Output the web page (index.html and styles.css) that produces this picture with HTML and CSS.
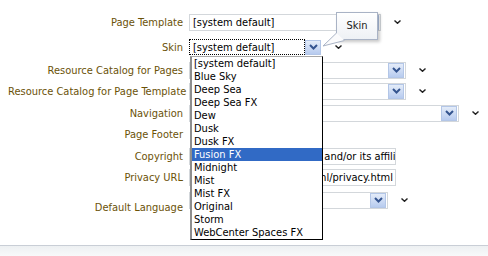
FILE: index.html
```html
<!DOCTYPE html>
<html lang="en">
<head>
    <meta charset="UTF-8">
    <title>Page Properties</title>
    <link rel="stylesheet" href="styles.css">
</head>
<body>
    <div class="page">
        <div class="form">
            <div class="label">Page Template</div>
            <div class="field">
                <div class="select w-page">
                    <span class="value">[system default]</span>
                    <span class="drop-btn"><svg width="9" height="6" viewBox="0 0 9 6"><path d="M1 1 L4.5 4.5 L8 1" fill="none" stroke="#34548f" stroke-width="2"/></svg></span>
                </div>
                <svg class="chev" width="7" height="4" viewBox="0 0 7 4"><path d="M0.5 0.5 L3.5 3.3 L6.5 0.5" fill="none" stroke="#222" stroke-width="1.4"/></svg>
            </div>

            <div class="label">Skin</div>
            <div class="field">
                <div class="skin-wrap">
                    <div class="select focused">
                        <span class="value focus-box">[system default]</span>
                        <span class="drop-btn"><svg width="9" height="6" viewBox="0 0 9 6"><path d="M1 1 L4.5 4.5 L8 1" fill="none" stroke="#34548f" stroke-width="2"/></svg></span>
                    </div>
                    <ul class="listbox">
                        <li>[system default]</li>
                        <li>Blue Sky</li>
                        <li>Deep Sea</li>
                        <li>Deep Sea FX</li>
                        <li>Dew</li>
                        <li>Dusk</li>
                        <li>Dusk FX</li>
                        <li class="selected">Fusion FX</li>
                        <li>Midnight</li>
                        <li>Mist</li>
                        <li>Mist FX</li>
                        <li>Original</li>
                        <li>Storm</li>
                        <li>WebCenter Spaces FX</li>
                    </ul>
                </div>
                <svg class="chev" width="7" height="4" viewBox="0 0 7 4"><path d="M0.5 0.5 L3.5 3.3 L6.5 0.5" fill="none" stroke="#222" stroke-width="1.4"/></svg>
            </div>

            <div class="label">Resource Catalog for Pages</div>
            <div class="field">
                <div class="select w-catalog">
                    <span class="value"></span>
                    <span class="drop-btn"><svg width="9" height="6" viewBox="0 0 9 6"><path d="M1 1 L4.5 4.5 L8 1" fill="none" stroke="#34548f" stroke-width="2"/></svg></span>
                </div>
                <svg class="chev" width="7" height="4" viewBox="0 0 7 4"><path d="M0.5 0.5 L3.5 3.3 L6.5 0.5" fill="none" stroke="#222" stroke-width="1.4"/></svg>
            </div>

            <div class="label">Resource Catalog for Page Template</div>
            <div class="field">
                <div class="select w-catalog">
                    <span class="value"></span>
                    <span class="drop-btn"><svg width="9" height="6" viewBox="0 0 9 6"><path d="M1 1 L4.5 4.5 L8 1" fill="none" stroke="#34548f" stroke-width="2"/></svg></span>
                </div>
                <svg class="chev" width="7" height="4" viewBox="0 0 7 4"><path d="M0.5 0.5 L3.5 3.3 L6.5 0.5" fill="none" stroke="#222" stroke-width="1.4"/></svg>
            </div>

            <div class="label">Navigation</div>
            <div class="field">
                <div class="select w-nav">
                    <span class="value"></span>
                    <span class="drop-btn"><svg width="9" height="6" viewBox="0 0 9 6"><path d="M1 1 L4.5 4.5 L8 1" fill="none" stroke="#34548f" stroke-width="2"/></svg></span>
                </div>
                <svg class="chev" width="7" height="4" viewBox="0 0 7 4"><path d="M0.5 0.5 L3.5 3.3 L6.5 0.5" fill="none" stroke="#222" stroke-width="1.4"/></svg>
            </div>

            <div class="label">Page Footer</div>
            <div class="field"></div>

            <div class="label">Copyright</div>
            <div class="field">
                <div class="textbox"><span>Copyright © 2011, Oracle and/or its affiliates. All rights reserved.</span></div>
            </div>

            <div class="label">Privacy URL</div>
            <div class="field">
                <div class="textbox scrolled"><span>http://www.oracle.com/html/privacy.html</span></div>
            </div>

            <div class="label low">Default Language</div>
            <div class="field">
                <div class="select w-lang">
                    <span class="value"></span>
                    <span class="drop-btn"><svg width="9" height="6" viewBox="0 0 9 6"><path d="M1 1 L4.5 4.5 L8 1" fill="none" stroke="#34548f" stroke-width="2"/></svg></span>
                </div>
                <svg class="chev" width="7" height="4" viewBox="0 0 7 4"><path d="M0.5 0.5 L3.5 3.3 L6.5 0.5" fill="none" stroke="#222" stroke-width="1.4"/></svg>
            </div>
        </div>

        <div class="footer"></div>

        <!-- hint bubble over the skin field -->
        <div class="tooltip">Skin</div>
        <svg class="tooltip-tail" width="24" height="17" viewBox="0 0 24 17">
            <polygon points="14.5,2 1,15 22.5,9.5" fill="#fbfbfc"/>
            <polyline points="14.5,2 1,15 22.5,9.5" fill="none" stroke="#a9b3c5" stroke-width="1"/>
        </svg>
    </div>
</body>
</html>
```

FILE: styles.css
```css
* {
    margin: 0;
    padding: 0;
    box-sizing: border-box;
}

body {
    font-family: "DejaVu Sans Condensed", "DejaVu Sans", sans-serif;
    font-size: 11px;
    background-color: #ffffff;
    color: #000;
    overflow: hidden;
}

.page {
    position: relative;
    width: 488px;
    height: 256px;
}

.form {
    display: grid;
    grid-template-columns: 175px auto;
    grid-template-rows: 24px 26px 20px 22px 22px 20px 24px 18px 28px;
    column-gap: 6px;
    align-items: center;
    padding: 10px 0 0 8px;
}

.label {
    text-align: right;
    color: #6b5208;
    white-space: nowrap;
    line-height: 13px;
}

.label.low {
    align-self: end;
}

.field {
    display: flex;
    align-items: center;
}

.select {
    display: flex;
    align-items: center;
    height: 17px;
    border: 1px solid #d3d7db;
    background-color: #fff;
}

.select .value {
    flex: 1;
    padding-left: 3px;
    white-space: nowrap;
    overflow: hidden;
    line-height: 15px;
}

.w-page { width: 192px; }
.w-catalog { width: 217px; }
.w-nav { width: 270px; }
.w-lang { width: 199px; }

.drop-btn {
    width: 16px;
    height: 15px;
    margin-right: 1px;
    display: flex;
    align-items: center;
    justify-content: center;
    background: linear-gradient(#e4ecf9, #b7cbef);
    border: 1px solid #b3c6e7;
}

.chev {
    margin-left: 13px;
}

.skin-wrap {
    position: relative;
}

.select.focused {
    width: 133px;
    height: 16px;
    border: none;
}

.focus-box {
    height: 16px;
    border: 1px dotted #000;
}

.listbox {
    position: absolute;
    left: 1px;
    top: 17px;
    width: 133px;
    list-style: none;
    background-color: #fff;
    border-left: 2px solid #8e8e8e;
    border-top: 1px solid #a8a8a8;
    border-right: 1px solid #000;
    border-bottom: 1px solid #000;
    z-index: 2;
}

.listbox li {
    height: 13px;
    line-height: 13px;
    padding-left: 2px;
    white-space: nowrap;
}

.listbox li.selected {
    background-color: #316ac5;
    color: #fff;
}

.textbox {
    display: flex;
    width: 207px;
    height: 17px;
    padding: 0 2px 0 3px;
    border: 1px solid #d3d7db;
    line-height: 15px;
    white-space: nowrap;
    overflow: hidden;
}

.textbox span {
    flex-shrink: 0;
}

.textbox.scrolled {
    justify-content: flex-end;
}

.footer {
    margin-top: 31px;
    height: 11px;
    border-top: 1px solid #c9ced6;
    background: linear-gradient(#edf0f2, #f8f9fa);
}

.tooltip {
    position: absolute;
    left: 336px;
    top: 12px;
    width: 42px;
    height: 28px;
    line-height: 26px;
    text-align: center;
    color: #222;
    border: 1px solid #a9b3c5;
    background: linear-gradient(#ffffff, #eef1f5);
    box-shadow: 2px 2px 3px rgba(0, 0, 0, 0.22);
    z-index: 3;
}

.tooltip-tail {
    position: absolute;
    left: 322px;
    top: 31px;
    z-index: 4;
}
```
